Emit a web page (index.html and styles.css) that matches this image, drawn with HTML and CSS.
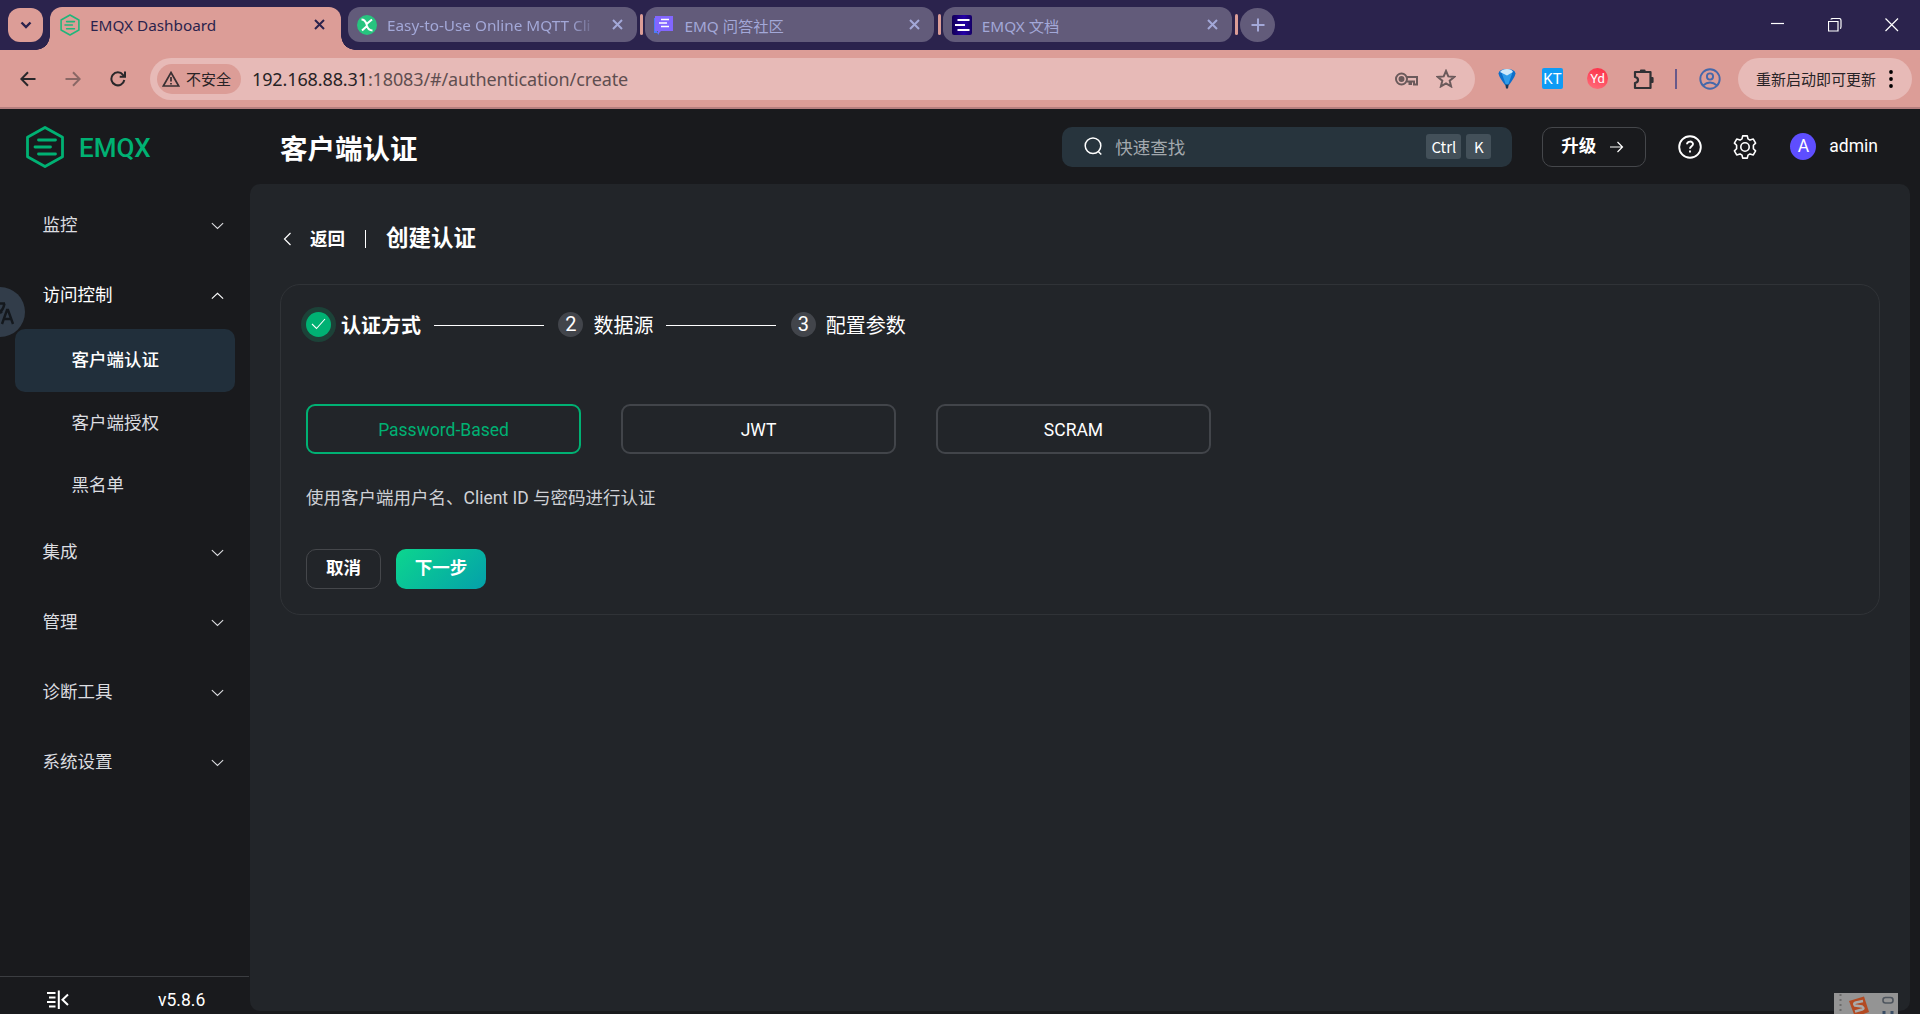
FILE: index.html
```html
<!DOCTYPE html>
<html lang="zh-CN">
<head>
    <meta charset="UTF-8">
    <meta name="viewport" content="width=device-width, initial-scale=1.0">
    <title>EMQX Dashboard</title>
    <link rel="stylesheet" href="styles.css">
</head>
<body>
    <!-- 浏览器标签栏 -->
    <div class="tab-strip">
        <div class="tab-search">
            <svg width="12" height="8" viewBox="0 0 12 8"><path d="M1.5 1.5 6 6l4.5-4.5"/></svg>
        </div>
        <div class="tab active">
            <svg class="favicon" viewBox="0 0 38 42" stroke="#1fb67a" stroke-width="3" fill="none" stroke-linecap="round" stroke-linejoin="round"><path d="M19 2 36 11.500v19L19 40 2 30.500v-19ZM12.500 14.500h15M9.500 21h14M12.500 28h15"/></svg>
            <span class="tab-title">EMQX Dashboard</span>
            <svg class="tab-close" viewBox="0 0 11 11"><path d="m1 1 9 9M10 1l-9 9"/></svg>
        </div>
        <div class="tab tab-fade">
            <svg class="favicon" viewBox="0 0 20 20"><circle cx="10" cy="10" r="10" fill="#27c47f"/><path d="M4.500 4.500q3.500 0 5 4.500L15 4.500M5 15.500 10 11q1.500 4.500 5.500 4.500M9.500 9l.5 2" stroke="#fff" stroke-width="2" fill="none"/></svg>
            <span class="tab-title">Easy-to-Use Online MQTT Cli</span>
            <svg class="tab-close" viewBox="0 0 11 11"><path d="m1 1 9 9M10 1l-9 9"/></svg>
        </div>
        <i class="tab-sep"></i>
        <div class="tab">
            <svg class="favicon" viewBox="0 0 20 20"><path d="M0 3h3v14l2 .500V20l-2-2H0Z" fill="#4a7cf8"/><path d="M1 1h18v15H7l-3 3v-3H1Z" fill="#8266ff"/><path d="M7 4.500h8M5 8h8M7 11.500h8" stroke="#fff" stroke-width="1.600"/></svg>
            <span class="tab-title">EMQ 问答社区</span>
            <svg class="tab-close" viewBox="0 0 11 11"><path d="m1 1 9 9M10 1l-9 9"/></svg>
        </div>
        <i class="tab-sep"></i>
        <div class="tab">
            <svg class="favicon" viewBox="0 0 20 20"><defs><linearGradient id="docs"><stop stop-color="#110054"/><stop offset=".6" stop-color="#2400a8"/><stop offset="1" stop-color="#150065"/></linearGradient></defs><rect width="20" height="20" rx="2" fill="url(#docs)"/><path d="M5.500 5h12M3 10h10M5.500 15h12" stroke="#fff" stroke-width="2"/></svg>
            <span class="tab-title">EMQX 文档</span>
            <svg class="tab-close" viewBox="0 0 11 11"><path d="m1 1 9 9M10 1l-9 9"/></svg>
        </div>
        <i class="tab-sep"></i>
        <div class="tab-new">
            <svg width="14" height="14" viewBox="0 0 14 14"><path d="M7 .500v13M.500 7h13"/></svg>
        </div>
        <div class="window-controls">
            <svg viewBox="0 0 14 14"><path d="M0 5.500h13"/></svg>
            <svg viewBox="0 0 14 14"><path d="M.500 3.500h9.500v9.500H.500ZM3 1.500Q3 .500 5 .500h6q2 0 2 2v6q0 2-1 2"/></svg>
            <svg viewBox="0 0 14 14"><path d="m.500.500 12.500 12.500M13 .500.500 13"/></svg>
        </div>
    </div>

    <!-- 地址栏 -->
    <div class="toolbar">
        <div class="nav-buttons">
            <svg width="16" height="16" viewBox="0 0 16 16"><path d="M15.500 8H1.500M8 1.300 1.300 8 8 14.700"/></svg>
            <svg class="disabled" width="16" height="16" viewBox="0 0 16 16"><path d="M.500 8h14M8 1.300 14.700 8 8 14.700"/></svg>
            <svg width="16" height="16" viewBox="0 0 16 16"><path d="M14.300 9A6.500 6.500 0 1 1 13 3.800L14.500 5.500M15 .500v5.300H9.700"/></svg>
        </div>
        <div class="omnibox">
            <div class="security-chip">
                <svg width="18" height="16" viewBox="0 0 18 16"><path d="M9 1.500 16.700 15H1.300Z"/><path d="M9 6v4.500M9 12v1.500"/></svg>
                <span>不安全</span>
            </div>
            <span class="url"><b>192.168.88.31</b>:18083/#/authentication/create</span>
            <svg class="key" width="23" height="14" viewBox="0 0 23 14"><circle cx="6.500" cy="7" r="5.500"/><circle cx="6.500" cy="7" r="2" fill="#6b5a5b"/><path d="M11.500 5H22v7.500h-3V9.500h-3V12h-1.500V9.500h-3"/></svg>
            <svg class="star" width="20" height="19" viewBox="0 0 20 19"><path d="m10 2 2.300 5.400 5.900.5-4.500 3.800 1.400 5.700L10 14.400l-5.100 3 1.400-5.700L1.800 7.900l5.900-.5Z"/></svg>
        </div>
        <div class="extensions">
            <svg width="20" height="22" viewBox="0 0 20 22"><path d="M1.500 5.500Q2 1 10 1t8.500 4.500Q18 9 12 17H8Q2 9 1.500 5.500Z" fill="#0d6fca"/><path d="M5 6q0-5 5-5t5 5l-4 11H9Z" fill="#2f9cea"/><path d="M3 4q2-3 7-3t6 3l-6 3.500Z" fill="#cfeafb"/><path d="M8.300 16.500h3.400L11 20.500H9Z" fill="#183455"/></svg>
            <span class="ext kt">KT</span>
            <span class="ext yd">Yd</span>
            <svg width="22" height="22" viewBox="0 0 22 22" fill="none" stroke="#303034" stroke-width="2.200" stroke-linejoin="round"><path d="M2 4h15.500v16H2v-5q3-.5 3-3T2 9Z"/><path d="M8 4V2.500h3.500V4M17.500 10h2v4h-2" fill="#303034"/></svg>
            <i class="ext-sep"></i>
            <svg width="22" height="22" viewBox="0 0 22 22" fill="none" stroke="#4568aa" stroke-width="1.900"><circle cx="11" cy="11" r="9.700"/><circle cx="11" cy="8.500" r="3.100"/><path d="M4 17.500q7-6 14 0"/></svg>
        </div>
        <div class="update">
            <span>重新启动即可更新</span>
            <svg width="4" height="18" viewBox="0 0 4 18"><circle cx="2" cy="2" r="1.900"/><circle cx="2" cy="9" r="1.900"/><circle cx="2" cy="16" r="1.900"/></svg>
        </div>
    </div>

    <!-- 控制台 -->
    <div class="app">
        <aside class="sidebar">
            <div class="logo">
                <svg width="38" height="42" viewBox="0 0 38 42"><path d="M19 1.500 36.500 11.200v19.600L19 40.500 1.500 30.800V11.200ZM12.500 14h17M9 21h15.500M12.500 28h17"/></svg>
                <span>EMQX</span>
            </div>
            <nav class="menu">
                <div class="menu-item">监控<svg class="arrow" viewBox="0 0 12 7"><path d="m.800.800 5.200 5 5.200-5"/></svg></div>
                <div class="menu-item open">访问控制<svg class="arrow" viewBox="0 0 12 7"><path d="m.800 6 5.200-5 5.200 5"/></svg></div>
                <div class="submenu">
                    <div class="submenu-item selected">客户端认证</div>
                    <div class="submenu-item">客户端授权</div>
                    <div class="submenu-item">黑名单</div>
                </div>
                <div class="menu-item">集成<svg class="arrow" viewBox="0 0 12 7"><path d="m.800.800 5.200 5 5.200-5"/></svg></div>
                <div class="menu-item">管理<svg class="arrow" viewBox="0 0 12 7"><path d="m.800.800 5.200 5 5.200-5"/></svg></div>
                <div class="menu-item">诊断工具<svg class="arrow" viewBox="0 0 12 7"><path d="m.800.800 5.200 5 5.200-5"/></svg></div>
                <div class="menu-item">系统设置<svg class="arrow" viewBox="0 0 12 7"><path d="m.800.800 5.200 5 5.200-5"/></svg></div>
            </nav>
            <div class="sidebar-footer">
                <svg width="22" height="20" viewBox="0 0 22 20"><path d="M0 3h8.500M2 7.500h6.500M0 12h8.500M2 16.500h6.500M11.800.500v18.500M21 4.500l-5.500 5.200 5.500 5.300"/></svg>
                <span>v5.8.6</span>
            </div>
        </aside>

        <div class="page">
            <header class="header">
                <h1>客户端认证</h1>
                <div class="search">
                    <svg width="19" height="19" viewBox="0 0 19 19"><circle cx="9" cy="8.800" r="7.800"/><path d="m14.300 14.500 3 3"/></svg>
                    <span>快速查找</span>
                    <kbd>Ctrl</kbd>
                    <kbd>K</kbd>
                </div>
                <div class="upgrade">升级<svg width="14" height="12" viewBox="0 0 14 12"><path d="M0 6h12.500M7.500 1l5 5-5 5"/></svg></div>
                <svg class="help" width="24" height="24" viewBox="0 0 24 24"><circle cx="12" cy="12" r="10.800"/><path d="M9 9.300c.2-3.600 6-3.600 6-.2 0 2.300-3 2.200-3 4.700M12 15.600v2"/></svg>
                <svg class="gear" width="24" height="24" viewBox="0 0 24 24"><path d="M9 3.900 9.700.900h4.600l.7 3 2 1.200 3.300-1 2.300 4-2.200 2.200v3.400l2.200 2.200-2.300 4-3.300-1-2 1.200-.7 3H9.700l-.7-3-2-1.200-3.300 1-2.300-4 2.200-2.200v-3.400L1.400 8.100l2.300-4 3.300 1Z"/><circle cx="12" cy="12" r="4.200"/></svg>
                <span class="avatar">A</span>
                <span class="username">admin</span>
            </header>

            <main class="main">
                <div class="page-header">
                    <svg width="9" height="14" viewBox="0 0 9 14"><path d="M7.500 1 1.500 7l6 6"/></svg>
                    <span class="back">返回</span>
                    <i class="divider"></i>
                    <h2>创建认证</h2>
                </div>
                <section class="card">
                    <div class="steps">
                        <span class="step-icon done"><svg width="15" height="12" viewBox="0 0 15 12"><path d="m1 6 4.500 4.500L14 1"/></svg></span>
                        <span class="step-title current">认证方式</span>
                        <i class="step-line"></i>
                        <span class="step-icon">2</span>
                        <span class="step-title">数据源</span>
                        <i class="step-line"></i>
                        <span class="step-icon">3</span>
                        <span class="step-title">配置参数</span>
                    </div>
                    <div class="methods">
                        <div class="method checked">Password-Based</div>
                        <div class="method">JWT</div>
                        <div class="method">SCRAM</div>
                    </div>
                    <p class="desc">使用客户端用户名、Client ID 与密码进行认证</p>
                    <div class="actions">
                        <button class="btn">取消</button>
                        <button class="btn primary">下一步</button>
                    </div>
                </section>
            </main>
        </div>
    </div>

    <!-- 悬浮的翻译球 -->
    <div class="translate-ball">
        <svg width="50" height="50" viewBox="0 0 50 50"><path d="M18 16.500h12M29.500 16.500q-1 6-5.500 10M24 23l3 3M27 37l5-14h1l5 14M29 32h7"/></svg>
    </div>
    <!-- 输入法状态条 -->
    <div class="ime">
        <svg width="64" height="21" viewBox="0 0 64 21"><path d="M6.500 1v20" stroke="#6b6b6b" stroke-width="2" stroke-dasharray="2 3"/><path d="m15 8 15-4.500L35 19l-14 5Z" fill="#b34a22"/><path d="m29 8-7 1.500q-3 1-1 3l7 1q3 2 0 3l-7 2" fill="none" stroke="#aaa" stroke-width="2.500"/><rect x="49" y="4.500" width="10" height="5.500" rx="2.500" fill="none" stroke="#4e555e" stroke-width="1.600"/><path d="M50 18v3M58 18v3" stroke="#394d65" stroke-width="3"/></svg>
    </div>
</body>
</html>
```
FILE: styles.css
```css
* {
    box-sizing: border-box;
}

body {
    margin: 0;
    height: 100vh;
    display: flex;
    flex-direction: column;
    overflow: hidden;
    position: relative;
    background-color: #191a1d;
    color: #fff;
    font-family: Roboto, 'Noto Sans CJK SC', sans-serif;
    font-size: 17.5px;
}

svg {
    display: block;
    flex: none;
}

/* 标签栏 */
.tab-strip {
    height: 50px;
    flex: none;
    display: flex;
    align-items: flex-start;
    padding: 7px 0 0 8px;
    background-color: #2b234d;
    font-family: 'Noto Sans', 'Noto Sans CJK SC', sans-serif;
    font-size: 15.3px;
}

.tab-search,
.tab-new {
    width: 35px;
    height: 34px;
    margin-top: 1px;
    display: flex;
    align-items: center;
    justify-content: center;
}

.tab-search {
    margin-right: 7px;
    border-radius: 12px;
    background-color: #dc9d97;
}

.tab-search svg {
    fill: none;
    stroke: #2b234d;
    stroke-width: 2.4;
}

.tab {
    position: relative;
    width: 289px;
    height: 35px;
    padding: 0 14px 0 9px;
    display: flex;
    align-items: center;
    border-radius: 12px;
    background-color: #625b7a;
    color: #a3a8d8;
}

.tab.active {
    width: 291px;
    height: 43px;
    margin-right: 7px;
    padding: 0 16px 8px 10px;
    border-radius: 12px 12px 0 0;
    background-color: #dc9d97;
    color: #2b234d;
}

/* 当前标签底部的圆角 */
.tab.active::before,
.tab.active::after {
    content: '';
    position: absolute;
    bottom: 0;
    width: 14px;
    height: 14px;
}

.tab.active::before {
    left: -14px;
    background: radial-gradient(circle at 0 0, transparent 13.5px, #dc9d97 14px);
}

.tab.active::after {
    right: -14px;
    background: radial-gradient(circle at 100% 0, transparent 13.5px, #dc9d97 14px);
}

.favicon {
    width: 20px;
    height: 20px;
    margin-right: 10px;
}

.active .favicon {
    height: 22px;
}

.tab-title {
    flex: 1;
    overflow: hidden;
    white-space: nowrap;
}

.tab-fade .tab-title {
    -webkit-mask-image: linear-gradient(90deg, #000 182px, transparent 212px);
    mask-image: linear-gradient(90deg, #000 182px, transparent 212px);
}

.tab-close {
    width: 11px;
    height: 11px;
    margin-left: 10px;
    fill: none;
    stroke: currentColor;
    stroke-width: 2;
}

.tab-sep {
    width: 3px;
    height: 21px;
    margin: 7px 2px 0 3.4px;
    border-radius: 2px;
    background-color: #dc9d97;
}

.tab-new {
    border-radius: 50%;
    background-color: #625b7a;
}

.tab-new svg {
    fill: none;
    stroke: #a3a8d8;
    stroke-width: 2;
}

.window-controls {
    display: flex;
    gap: 43px;
    margin: 11px 21px 0 auto;
}

.window-controls svg {
    width: 14px;
    height: 14px;
    fill: none;
    stroke: #fff;
    stroke-width: 1.2;
}

/* 地址栏 */
.toolbar {
    height: 59px;
    flex: none;
    display: flex;
    align-items: center;
    padding: 0 8px 0 20px;
    border-bottom: 2px solid #b67f7f;
    background-color: #dc9d97;
    color: #272326;
    font-family: 'Noto Sans', 'Noto Sans CJK SC', sans-serif;
}

.nav-buttons {
    width: 130px;
    display: flex;
    gap: 29px;
}

.nav-buttons svg {
    fill: none;
    stroke: #29272a;
    stroke-width: 2;
}

.nav-buttons .disabled {
    opacity: 0.45;
}

.omnibox {
    width: 1325px;
    height: 42px;
    padding: 0 19px 0 7px;
    display: flex;
    align-items: center;
    border-radius: 21px;
    background-color: #e7bab7;
}

.security-chip {
    width: 84px;
    height: 30px;
    padding-left: 5px;
    display: flex;
    align-items: center;
    gap: 6px;
    border-radius: 15px;
    background-color: #dc9d97;
    font-size: 15px;
}

.security-chip svg {
    fill: none;
    stroke: #3a3033;
    stroke-width: 1.7;
}

.url {
    margin-left: 11px;
    font-size: 18px;
    letter-spacing: -0.12px;
    color: #5f4e50;
}

.url b {
    font-weight: normal;
    color: #272326;
}

.omnibox .key {
    margin-left: auto;
    margin-right: 18px;
}

.key,
.star {
    fill: none;
    stroke: #6b5a5b;
    stroke-width: 2;
}

.extensions {
    width: 263px;
    padding-left: 22px;
    display: flex;
    align-items: center;
}

.ext {
    width: 21px;
    height: 21px;
    margin-left: 25px;
    border-radius: 2px;
    color: #fff;
    font: 15px/22px Roboto, sans-serif;
    text-align: center;
}

.kt {
    background-color: #0f9bf5;
}

.yd {
    margin-left: 24px;
    margin-right: 25px;
    border-radius: 50%;
    background: linear-gradient(200deg, #fc2c44, #ff6f7c);
    font-size: 13px;
}

.ext-sep {
    width: 2px;
    height: 20px;
    margin: 0 22px 0 20px;
    background-color: #68598a;
}

.update {
    width: 174px;
    height: 42px;
    padding: 0 19px 0 18px;
    display: flex;
    align-items: center;
    justify-content: space-between;
    border-radius: 21px;
    background-color: #e7bab7;
    font-size: 15px;
    white-space: nowrap;
}

/* 整体布局 */
.app {
    flex: 1;
    min-height: 0;
    display: flex;
}

.sidebar {
    width: 250px;
    display: flex;
    flex-direction: column;
}

.logo {
    height: 80px;
    padding: 17px 0 0 26px;
    display: flex;
    gap: 15px;
    color: #00b173;
    font-size: 26px;
    font-weight: 500;
    line-height: 44px;
}

.logo svg {
    fill: none;
    stroke: currentColor;
    stroke-width: 2.8;
    stroke-linecap: round;
    stroke-linejoin: round;
}

.menu {
    flex: 1;
}

.menu-item {
    height: 70px;
    padding: 0 26px 2px 42.5px;
    display: flex;
    align-items: center;
    justify-content: space-between;
    color: #dcdde0;
}

.menu-item.open {
    color: #fff;
}

.arrow {
    width: 13px;
    height: 8px;
    margin-top: 5px;
    fill: none;
    stroke: currentColor;
    stroke-width: 1;
}

.submenu {
    padding: 0 15px;
}

.submenu-item {
    height: 62.5px;
    padding-left: 56.5px;
    line-height: 63.5px;
    border-radius: 10px;
    color: #dcdde0;
}

.submenu-item.selected {
    background-color: #212f3b;
    color: #fff;
    font-weight: 500;
}

.sidebar-footer {
    width: 249px;
    height: 38px;
    padding: 0 0 0 47px;
    display: flex;
    align-items: center;
    gap: 89px;
    border-top: 1px solid #3b3d41;
}

.sidebar-footer span {
    padding-top: 8px;
}

.sidebar-footer svg {
    margin-top: 9px;
    fill: none;
    stroke: #fff;
    stroke-width: 2;
}

.page {
    flex: 1;
    padding: 0 10px 3px 0;
    display: flex;
    flex-direction: column;
}

/* 顶栏 */
.header {
    height: 75px;
    flex: none;
    padding: 0 32px 0 30px;
    display: flex;
    align-items: center;
}

.header h1 {
    margin: 0 auto 0 0;
    font-size: 27.5px;
    font-weight: bold;
}

.search {
    width: 450px;
    height: 40px;
    margin-right: 30px;
    padding: 0 21px 0 22px;
    display: flex;
    align-items: center;
    border-radius: 10px;
    background-color: #27343d;
    color: #a3a9ae;
}

.search span {
    margin: 0 auto 0 12px;
}

.search svg,
.help,
.gear {
    fill: none;
    stroke: #fff;
    stroke-width: 1.5;
}

kbd {
    height: 25px;
    margin-left: 5px;
    padding: 0 5px;
    border-radius: 3px;
    background-color: #435059;
    color: #fff;
    font: 15px/25px 'Noto Sans CJK SC', sans-serif;
}

kbd + kbd {
    padding: 0 7.7px;
}

.upgrade {
    width: 104px;
    height: 40px;
    padding: 0 21px 4px 18px;
    display: flex;
    align-items: center;
    justify-content: space-between;
    border: 1px solid #45474b;
    border-radius: 10px;
    font-weight: bold;
}

.upgrade svg {
    margin-top: 5px;
    fill: none;
    stroke: #fff;
    stroke-width: 1.2;
}

.help {
    margin-left: 32px;
    stroke-width: 1.9;
}

.gear {
    margin: 1px 33px 0 31px;
    stroke-width: 1.6;
    stroke-linejoin: round;
}

.avatar {
    width: 26px;
    height: 27px;
    margin-right: 13px;
    border-radius: 50%;
    background-color: #5e4eff;
    line-height: 26px;
    text-align: center;
}

.username {
    margin-top: -2px;
}

/* 主内容 */
.main {
    flex: 1;
    padding: 33px 30px;
    border-radius: 10px;
    background-color: #222529;
}

.page-header {
    height: 40px;
    margin-bottom: 27px;
    padding-left: 3px;
    display: flex;
    align-items: center;
}

.page-header svg {
    margin-top: 3px;
    fill: none;
    stroke: #fff;
    stroke-width: 1.2;
}

.back {
    margin-left: 18px;
    font-weight: bold;
}

.divider {
    width: 1px;
    height: 18px;
    margin: 3px 20px 0;
    background-color: #fff;
}

.page-header h2 {
    margin: -2px 0 0;
    font-size: 22.5px;
    font-weight: bold;
}

.card {
    height: 331px;
    padding: 25px 25px;
    border: 1px solid #303337;
    border-radius: 20px;
}

.steps {
    height: 28px;
    display: flex;
    align-items: center;
    font-size: 20px;
}

.step-icon {
    width: 25px;
    height: 25px;
    display: flex;
    align-items: center;
    justify-content: center;
    border-radius: 50%;
    background-color: #42454b;
}

.step-icon.done {
    background-color: #00b173;
    box-shadow: 0 0 0 5px #1c4238;
}

.done svg {
    fill: none;
    stroke: #fff;
    stroke-width: 1.1;
}

.step-title {
    margin-left: 10px;
}

.step-title.current {
    font-weight: bold;
}

.step-line {
    width: 110px;
    height: 1px;
    margin: 2px 14.6px 0 12.8px;
    background-color: #fff;
}

.methods {
    margin-top: 66px;
    display: flex;
    gap: 40px;
}

.method {
    width: 275px;
    height: 50px;
    border: 2px solid #42454a;
    border-radius: 9px;
    line-height: 48px;
    text-align: center;
}

.method.checked {
    border-color: #00b173;
    color: #00b173;
}

.desc {
    margin: 31px 0 37px;
    line-height: 27px;
    color: #cfd1d6;
}

.actions {
    display: flex;
    gap: 15px;
}

.btn {
    width: 75px;
    height: 40px;
    padding: 0 0 5px;
    border: 1px solid #45474b;
    border-radius: 10px;
    background: none;
    color: #fff;
    font: bold 17.5px Roboto, 'Noto Sans CJK SC', sans-serif;
}

.btn.primary {
    width: 90px;
    border: none;
    background: linear-gradient(135deg, #0cd68e, #04a0aa);
}

/* 悬浮元素 */
.translate-ball {
    position: absolute;
    left: -25px;
    top: 287px;
    width: 50px;
    height: 50px;
    border-radius: 50%;
    background-color: #323d4a;
}

.translate-ball svg {
    fill: none;
    stroke: #14181d;
    stroke-width: 2.4;
}

.ime {
    position: absolute;
    right: 22px;
    bottom: 0;
    width: 64px;
    height: 21px;
    background-color: #949494;
}
```
